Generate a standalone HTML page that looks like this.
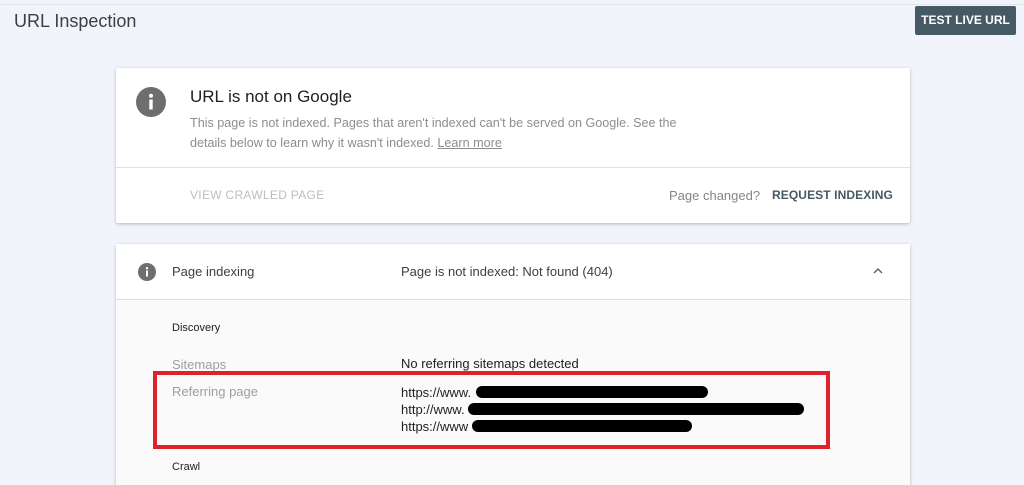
<!DOCTYPE html>
<html><head><meta charset="utf-8"><style>
*{margin:0;padding:0;box-sizing:border-box}
html,body{width:1024px;height:485px;overflow:hidden}
body{background:#f1f4fb;font-family:"Liberation Sans",Arial,sans-serif;position:relative;color:#202124}
.a{position:absolute;white-space:nowrap}
.card{position:absolute;left:116px;width:794px;background:#fff;box-shadow:0 1px 3px rgba(0,0,0,.25);border-radius:2px}
.bar{position:absolute;height:12px;background:#000;border-radius:6px}
</style></head><body>
<div class="a" style="left:0;top:4px;width:1024px;height:1px;background:#e3e6ec"></div>
<div class="a" style="left:14px;top:11px;font-size:18px;color:#3c4043">URL Inspection</div>
<div class="a" style="left:915px;top:6px;width:101px;height:29px;background:#455a64;border-radius:2px;color:#fff;font-weight:bold;font-size:12px;line-height:29px;text-align:center">TEST LIVE URL</div>

<div class="card" style="top:68px;height:155px">
<svg class="a" style="left:20px;top:19px" width="30" height="30" viewBox="0 0 30 30"><circle cx="15" cy="15" r="15" fill="#6e6e6e"/><rect x="13.3" y="12.5" width="3.4" height="10" fill="#fff"/><circle cx="15" cy="8.8" r="2" fill="#fff"/></svg>
<div class="a" style="left:74px;top:19px;font-size:17px;color:#202124">URL is not on Google</div>
<div class="a" style="left:74px;top:45px;font-size:12.6px;color:#8a8d91;line-height:20px">This page is not indexed. Pages that aren't indexed can't be served on Google. See the<br>details below to learn why it wasn't indexed. <span style="text-decoration:underline">Learn more</span></div>
<div class="a" style="left:0;top:99px;width:794px;height:1px;background:#e0e0e0"></div>
<div class="a" style="left:74px;top:120px;font-size:12px;color:#bdbdbd;letter-spacing:.3px">VIEW CRAWLED PAGE</div>
<div class="a" style="left:553px;top:120px;font-size:13px;color:#80868b">Page changed?</div>
<div class="a" style="left:656px;top:120px;font-size:12px;color:#455a64;font-weight:bold;letter-spacing:.1px">REQUEST INDEXING</div>
</div>

<div class="card" style="top:244px;height:260px;background:#fafafa">
<div class="a" style="left:0;top:0;width:794px;height:56px;background:#fff;border-bottom:1px solid #e0e0e0"></div>
<svg class="a" style="left:22px;top:19px" width="18" height="18" viewBox="0 0 18 18"><circle cx="9" cy="9" r="9" fill="#6e6e6e"/><rect x="8" y="7.5" width="2" height="6" fill="#fff"/><circle cx="9" cy="5.2" r="1.2" fill="#fff"/></svg>
<div class="a" style="left:56px;top:20px;font-size:13px;color:#3c4043">Page indexing</div>
<div class="a" style="left:285px;top:20px;font-size:13px;color:#3c4043">Page is not indexed: Not found (404)</div>
<svg class="a" style="left:756px;top:22px" width="12" height="10" viewBox="0 0 12 10"><path d="M2 7 L6 3 L10 7" stroke="#5f6368" stroke-width="1.5" fill="none"/></svg>
<div class="a" style="left:56px;top:78px;font-size:11px;color:#202124">Discovery</div>
<div class="a" style="left:56px;top:113px;font-size:13px;color:#9aa0a6">Sitemaps</div>
<div class="a" style="left:285px;top:112px;font-size:13px;color:#202124">No referring sitemaps detected</div>
<div class="a" style="left:56px;top:140px;font-size:13px;color:#9aa0a6">Referring page</div>
<div class="a" style="left:285px;top:140px;font-size:13px;color:#202124;line-height:17px">https://www.<br>http://www.<br>https://www</div>
<div class="bar" style="left:360px;top:142px;width:232px"></div>
<div class="bar" style="left:352px;top:159px;width:336px"></div>
<div class="bar" style="left:356px;top:176px;width:220px"></div>
<div class="a" style="left:56px;top:217px;font-size:11px;color:#202124">Crawl</div>
</div>

<div class="a" style="left:153px;top:371px;width:677px;height:78px;border:4px solid #e0202a"></div>
</body></html>
